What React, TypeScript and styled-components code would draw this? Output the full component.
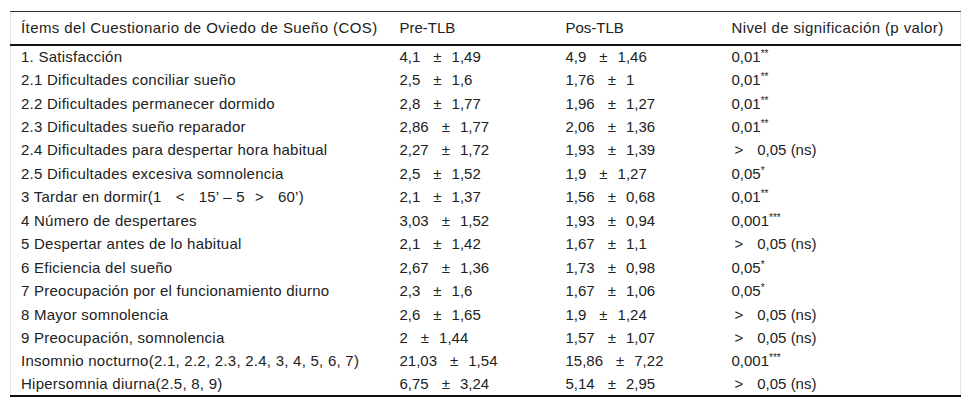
import React from "react";
import styled, { createGlobalStyle } from "styled-components";

const Global = createGlobalStyle`
  html, body { margin: 0; padding: 0; background: #fff; }
  body { font-family: "Liberation Sans", Arial, sans-serif; }
`;

const Page = styled.div`
  padding: 11px 10px 0 10px;
`;

const Table = styled.table`
  width: 950px;
  table-layout: fixed;
  border-collapse: collapse;
  font-size: 15px;
  color: #222;
  border-left: 1px solid #e4e4e4;
  border-right: 1px solid #e4e4e4;
  border-bottom: 2px solid #111;
`;

const HeadRow = styled.tr`
  height: 33px;
  border-top: 1px solid #333;
  border-bottom: 2px solid #111;
`;

const Th = styled.th<{ $w: number; $ls?: number }>`
  width: ${(p) => p.$w}px;
  box-sizing: border-box;
  text-align: left;
  font-weight: normal;
  padding: 0 10px;
  white-space: nowrap;
  letter-spacing: ${(p) => p.$ls ?? 0}px;
`;

const Row = styled.tr`
  height: 23.45px;
`;

const Td = styled.td<{ $ls?: number }>`
  padding: 0 10px;
  white-space: nowrap;
  line-height: 17px;
  letter-spacing: ${(p) => p.$ls ?? 0}px;
`;

const Op = styled.span<{ $l?: number; $r?: number }>`
  display: inline-block;
  margin-left: ${(p) => p.$l ?? 13}px;
  margin-right: ${(p) => p.$r ?? 10}px;
`;

const Sup = styled.sup`
  font-size: 10px;
  vertical-align: 5px;
  line-height: 0;
`;

type R = {
  item: React.ReactNode;
  pre: [string, string];
  pos: [string, string];
  p: React.ReactNode;
};

const Val = ({ v }: { v: [string, string] }) => (
  <>
    {v[0]}
    <Op>±</Op>
    {v[1]}
  </>
);

const sig = (v: string, stars: string) => (
  <>
    {v}
    <Sup>{stars}</Sup>
  </>
);
const ns = (
  <>
    <Op $l={3} $r={14}>&gt;</Op>0,05 (ns)
  </>
);

const rows: R[] = [
  { item: "1. Satisfacción", pre: ["4,1", "1,49"], pos: ["4,9", "1,46"], p: sig("0,01", "**") },
  { item: "2.1 Dificultades conciliar sueño", pre: ["2,5", "1,6"], pos: ["1,76", "1"], p: sig("0,01", "**") },
  { item: "2.2 Dificultades permanecer dormido", pre: ["2,8", "1,77"], pos: ["1,96", "1,27"], p: sig("0,01", "**") },
  { item: "2.3 Dificultades sueño reparador", pre: ["2,86", "1,77"], pos: ["2,06", "1,36"], p: sig("0,01", "**") },
  { item: "2.4 Dificultades para despertar hora habitual", pre: ["2,27", "1,72"], pos: ["1,93", "1,39"], p: ns },
  { item: "2.5 Dificultades excesiva somnolencia", pre: ["2,5", "1,52"], pos: ["1,9", "1,27"], p: sig("0,05", "*") },
  {
    item: (
      <>
        3 Tardar en dormir(1<Op $l={14} $r={14}>&lt;</Op>15’ – 5<Op $l={10} $r={14}>&gt;</Op>60’)
      </>
    ),
    pre: ["2,1", "1,37"],
    pos: ["1,56", "0,68"],
    p: sig("0,01", "**"),
  },
  { item: "4 Número de despertares", pre: ["3,03", "1,52"], pos: ["1,93", "0,94"], p: sig("0,001", "***") },
  { item: "5 Despertar antes de lo habitual", pre: ["2,1", "1,42"], pos: ["1,67", "1,1"], p: ns },
  { item: "6 Eficiencia del sueño", pre: ["2,67", "1,36"], pos: ["1,73", "0,98"], p: sig("0,05", "*") },
  { item: "7 Preocupación por el funcionamiento diurno", pre: ["2,3", "1,6"], pos: ["1,67", "1,06"], p: sig("0,05", "*") },
  { item: "8 Mayor somnolencia", pre: ["2,6", "1,65"], pos: ["1,9", "1,24"], p: ns },
  { item: "9 Preocupación, somnolencia", pre: ["2", "1,44"], pos: ["1,57", "1,07"], p: ns },
  { item: "Insomnio nocturno(2.1, 2.2, 2.3, 2.4, 3, 4, 5, 6, 7)", pre: ["21,03", "1,54"], pos: ["15,86", "7,22"], p: sig("0,001", "***") },
  { item: "Hipersomnia diurna(2.5, 8, 9)", pre: ["6,75", "3,24"], pos: ["5,14", "2,95"], p: ns },
];

export default function App() {
  return (
    <Page>
      <Global />
      <Table>
        <thead>
          <HeadRow>
            <Th $w={379} $ls={0.42}>Ítems del Cuestionario de Oviedo de Sueño (COS)</Th>
            <Th $w={166}>Pre-TLB</Th>
            <Th $w={166}>Pos-TLB</Th>
            <Th $w={239} $ls={0.4}>Nivel de significación (p valor)</Th>
          </HeadRow>
        </thead>
        <tbody>
          {rows.map((r, i) => (
            <Row key={i}>
              <Td $ls={0.25}>{r.item}</Td>
              <Td>
                <Val v={r.pre} />
              </Td>
              <Td>
                <Val v={r.pos} />
              </Td>
              <Td>{r.p}</Td>
            </Row>
          ))}
        </tbody>
      </Table>
    </Page>
  );
}
